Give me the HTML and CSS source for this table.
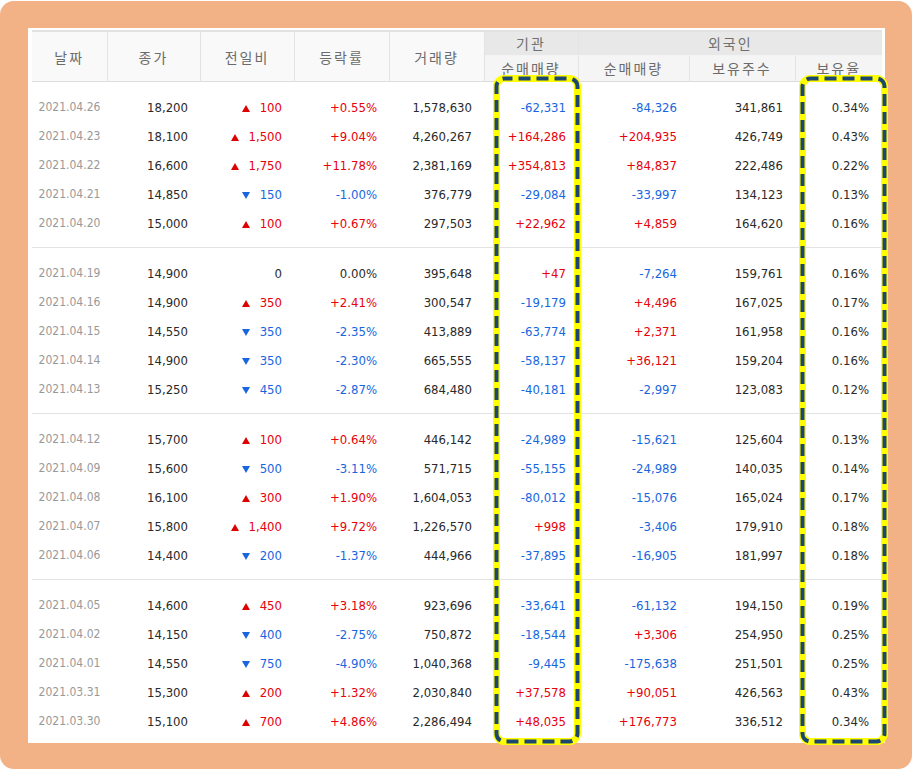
FILE: index.html
```html
<!DOCTYPE html>
<html lang="ko">
<head>
<meta charset="utf-8">
<title>투자자별 매매동향</title>
<link rel="stylesheet" href="styles.css">
</head>
<body>
<div class="frame">
  <div class="panel">
    <table class="trades">
      <colgroup>
        <col class="c-date"><col class="c-close"><col class="c-diff"><col class="c-rate"><col class="c-vol">
        <col class="c-inst"><col class="c-fnet"><col class="c-fhold"><col class="c-fratio">
      </colgroup>
      <thead>
        <tr class="h1">
          <th rowspan="2">날짜</th>
          <th rowspan="2">종가</th>
          <th rowspan="2">전일비</th>
          <th rowspan="2">등락률</th>
          <th rowspan="2">거래량</th>
          <th class="grp">기관</th>
          <th class="grp" colspan="3">외국인</th>
        </tr>
        <tr class="h2">
          <th class="sub">순매매량</th>
          <th class="sub">순매매량</th>
          <th class="sub">보유주수</th>
          <th class="sub last">보유율</th>
        </tr>
      </thead>
      <tbody class="grp-rows">
        <tr><td class="date">2021.04.26</td><td>18,200</td><td class="up"><i class="tri-up"></i>100</td><td class="up">+0.55%</td><td>1,578,630</td><td class="dn">-62,331</td><td class="dn">-84,326</td><td>341,861</td><td class="r13">0.34%</td></tr>
        <tr><td class="date">2021.04.23</td><td>18,100</td><td class="up"><i class="tri-up"></i>1,500</td><td class="up">+9.04%</td><td>4,260,267</td><td class="up">+164,286</td><td class="up">+204,935</td><td>426,749</td><td class="r13">0.43%</td></tr>
        <tr><td class="date">2021.04.22</td><td>16,600</td><td class="up"><i class="tri-up"></i>1,750</td><td class="up">+11.78%</td><td>2,381,169</td><td class="up">+354,813</td><td class="up">+84,837</td><td>222,486</td><td class="r13">0.22%</td></tr>
        <tr><td class="date">2021.04.21</td><td>14,850</td><td class="dn"><i class="tri-dn"></i>150</td><td class="dn">-1.00%</td><td>376,779</td><td class="dn">-29,084</td><td class="dn">-33,997</td><td>134,123</td><td class="r13">0.13%</td></tr>
        <tr><td class="date">2021.04.20</td><td>15,000</td><td class="up"><i class="tri-up"></i>100</td><td class="up">+0.67%</td><td>297,503</td><td class="up">+22,962</td><td class="up">+4,859</td><td>164,620</td><td class="r13">0.16%</td></tr>
      </tbody>
      <tbody class="grp-rows">
        <tr><td class="date">2021.04.19</td><td>14,900</td><td>0</td><td>0.00%</td><td>395,648</td><td class="up">+47</td><td class="dn">-7,264</td><td>159,761</td><td class="r13">0.16%</td></tr>
        <tr><td class="date">2021.04.16</td><td>14,900</td><td class="up"><i class="tri-up"></i>350</td><td class="up">+2.41%</td><td>300,547</td><td class="dn">-19,179</td><td class="up">+4,496</td><td>167,025</td><td class="r13">0.17%</td></tr>
        <tr><td class="date">2021.04.15</td><td>14,550</td><td class="dn"><i class="tri-dn"></i>350</td><td class="dn">-2.35%</td><td>413,889</td><td class="dn">-63,774</td><td class="up">+2,371</td><td>161,958</td><td class="r13">0.16%</td></tr>
        <tr><td class="date">2021.04.14</td><td>14,900</td><td class="dn"><i class="tri-dn"></i>350</td><td class="dn">-2.30%</td><td>665,555</td><td class="dn">-58,137</td><td class="up">+36,121</td><td>159,204</td><td class="r13">0.16%</td></tr>
        <tr><td class="date">2021.04.13</td><td>15,250</td><td class="dn"><i class="tri-dn"></i>450</td><td class="dn">-2.87%</td><td>684,480</td><td class="dn">-40,181</td><td class="dn">-2,997</td><td>123,083</td><td class="r13">0.12%</td></tr>
      </tbody>
      <tbody class="grp-rows">
        <tr><td class="date">2021.04.12</td><td>15,700</td><td class="up"><i class="tri-up"></i>100</td><td class="up">+0.64%</td><td>446,142</td><td class="dn">-24,989</td><td class="dn">-15,621</td><td>125,604</td><td class="r13">0.13%</td></tr>
        <tr><td class="date">2021.04.09</td><td>15,600</td><td class="dn"><i class="tri-dn"></i>500</td><td class="dn">-3.11%</td><td>571,715</td><td class="dn">-55,155</td><td class="dn">-24,989</td><td>140,035</td><td class="r13">0.14%</td></tr>
        <tr><td class="date">2021.04.08</td><td>16,100</td><td class="up"><i class="tri-up"></i>300</td><td class="up">+1.90%</td><td>1,604,053</td><td class="dn">-80,012</td><td class="dn">-15,076</td><td>165,024</td><td class="r13">0.17%</td></tr>
        <tr><td class="date">2021.04.07</td><td>15,800</td><td class="up"><i class="tri-up"></i>1,400</td><td class="up">+9.72%</td><td>1,226,570</td><td class="up">+998</td><td class="dn">-3,406</td><td>179,910</td><td class="r13">0.18%</td></tr>
        <tr><td class="date">2021.04.06</td><td>14,400</td><td class="dn"><i class="tri-dn"></i>200</td><td class="dn">-1.37%</td><td>444,966</td><td class="dn">-37,895</td><td class="dn">-16,905</td><td>181,997</td><td class="r13">0.18%</td></tr>
      </tbody>
      <tbody class="grp-rows">
        <tr><td class="date">2021.04.05</td><td>14,600</td><td class="up"><i class="tri-up"></i>450</td><td class="up">+3.18%</td><td>923,696</td><td class="dn">-33,641</td><td class="dn">-61,132</td><td>194,150</td><td class="r13">0.19%</td></tr>
        <tr><td class="date">2021.04.02</td><td>14,150</td><td class="dn"><i class="tri-dn"></i>400</td><td class="dn">-2.75%</td><td>750,872</td><td class="dn">-18,544</td><td class="up">+3,306</td><td>254,950</td><td class="r13">0.25%</td></tr>
        <tr><td class="date">2021.04.01</td><td>14,550</td><td class="dn"><i class="tri-dn"></i>750</td><td class="dn">-4.90%</td><td>1,040,368</td><td class="dn">-9,445</td><td class="dn">-175,638</td><td>251,501</td><td class="r13">0.25%</td></tr>
        <tr><td class="date">2021.03.31</td><td>15,300</td><td class="up"><i class="tri-up"></i>200</td><td class="up">+1.32%</td><td>2,030,840</td><td class="up">+37,578</td><td class="up">+90,051</td><td>426,563</td><td class="r13">0.43%</td></tr>
        <tr><td class="date">2021.03.30</td><td>15,100</td><td class="up"><i class="tri-up"></i>700</td><td class="up">+4.86%</td><td>2,286,494</td><td class="up">+48,035</td><td class="up">+176,773</td><td>336,512</td><td class="r13">0.34%</td></tr>
      </tbody>
    </table>
  </div>

  <svg class="mark mark-inst" width="88" height="670" viewBox="0 0 88 670" aria-hidden="true">
    <rect x="3.5" y="3.5" width="81" height="663" rx="8" ry="8" fill="none" stroke="#ffff00" stroke-width="7"/>
    <rect x="3.5" y="3.5" width="81" height="663" rx="8" ry="8" fill="none" stroke="#1d4670" stroke-width="4" stroke-dasharray="12 6" stroke-dashoffset="4"/>
  </svg>
  <svg class="mark mark-ratio" width="89" height="670" viewBox="0 0 89 670" aria-hidden="true">
    <rect x="3.5" y="3.5" width="82" height="663" rx="8" ry="8" fill="none" stroke="#ffff00" stroke-width="7"/>
    <rect x="3.5" y="3.5" width="82" height="663" rx="8" ry="8" fill="none" stroke="#1d4670" stroke-width="4" stroke-dasharray="12 6" stroke-dashoffset="4"/>
  </svg>
</div>
</body>
</html>
```

FILE: styles.css
```css
html, body {
  margin: 0;
  padding: 0;
  background: #ffffff;
}

body {
  padding-top: 1px;
}

.frame {
  position: relative;
  width: 912px;
  height: 768px;
  box-sizing: border-box;
  padding: 27px 0 0 28px;
  background: #f3b186;
  border-radius: 14px;
}

.panel {
  width: 857px;
  height: 715px;
  box-sizing: border-box;
  padding: 2px 3px 0 4px;
  background: #ffffff;
  overflow: hidden;
}

.trades {
  width: 850px;
  border-collapse: collapse;
  table-layout: fixed;
  font-family: "DejaVu Sans Condensed", "DejaVu Sans", "Liberation Sans", sans-serif;
  font-stretch: condensed;
  font-size: 13px;
  color: #2a2a2a;
}

.c-date { width: 75px; }
.c-close { width: 93px; }
.c-diff { width: 94px; }
.c-rate { width: 95px; }
.c-vol { width: 95px; }
.c-inst { width: 94px; }
.c-fnet { width: 111px; }
.c-fhold { width: 106px; }
.c-fratio { width: 87px; }

/* header */
.trades thead {
  border-top: 2px solid #e2e2e2;
  border-bottom: 1px solid #dcdcdc;
}

.trades th {
  padding: 0;
  font-family: "Noto Sans CJK KR", "Noto Sans", sans-serif;
  font-stretch: normal;
  font-weight: 400;
  font-size: 14px;
  letter-spacing: 2px;
  color: #6b6b6b;
  background: #f9f9f9;
  border-right: 1px solid #e3e3e3;
  text-align: center;
}

.trades th:last-child {
  border-right: 0;
}

.trades .h1 th.grp {
  height: 23px;
  line-height: 23px;
  background: #e8e8e8;
  border-bottom: 1px solid #f3f3f3;
  color: #707070;
}

.trades .h1 th.grp + th.grp {
  border-right: 0;
}

.trades .h2 th.sub {
  height: 25px;
  line-height: 25px;
  background: #f5f5f5;
}

/* body */
.trades td {
  padding: 0 12px 0 0;
  line-height: 29px;
  text-align: right;
  white-space: nowrap;
}

.trades td.r13 {
  padding-right: 13px;
}

.trades td.date {
  padding: 0;
  text-align: center;
  font-size: 12px;
  color: #999999;
}

.grp-rows tr:first-child td {
  padding-top: 11px;
}

.grp-rows tr:last-child td {
  padding-bottom: 9px;
}

.grp-rows + .grp-rows {
  border-top: 1px solid #e3e3e3;
}

.trades td.up { color: #e8000b; }
.trades td.dn { color: #1766e0; }

.tri-up,
.tri-dn {
  display: inline-block;
  width: 0;
  height: 0;
  margin-right: 10px;
  border-left: 4.5px solid transparent;
  border-right: 4.5px solid transparent;
}

.tri-up {
  border-bottom: 7px solid #dd0000;
  vertical-align: 0;
}

.tri-dn {
  border-top: 7px solid #1766e0;
  vertical-align: 0;
}

/* highlight marks (overlay) */
.mark {
  position: absolute;
  top: 74px;
  display: block;
}

.mark-inst { left: 493px; }
.mark-ratio { left: 799px; }
```
